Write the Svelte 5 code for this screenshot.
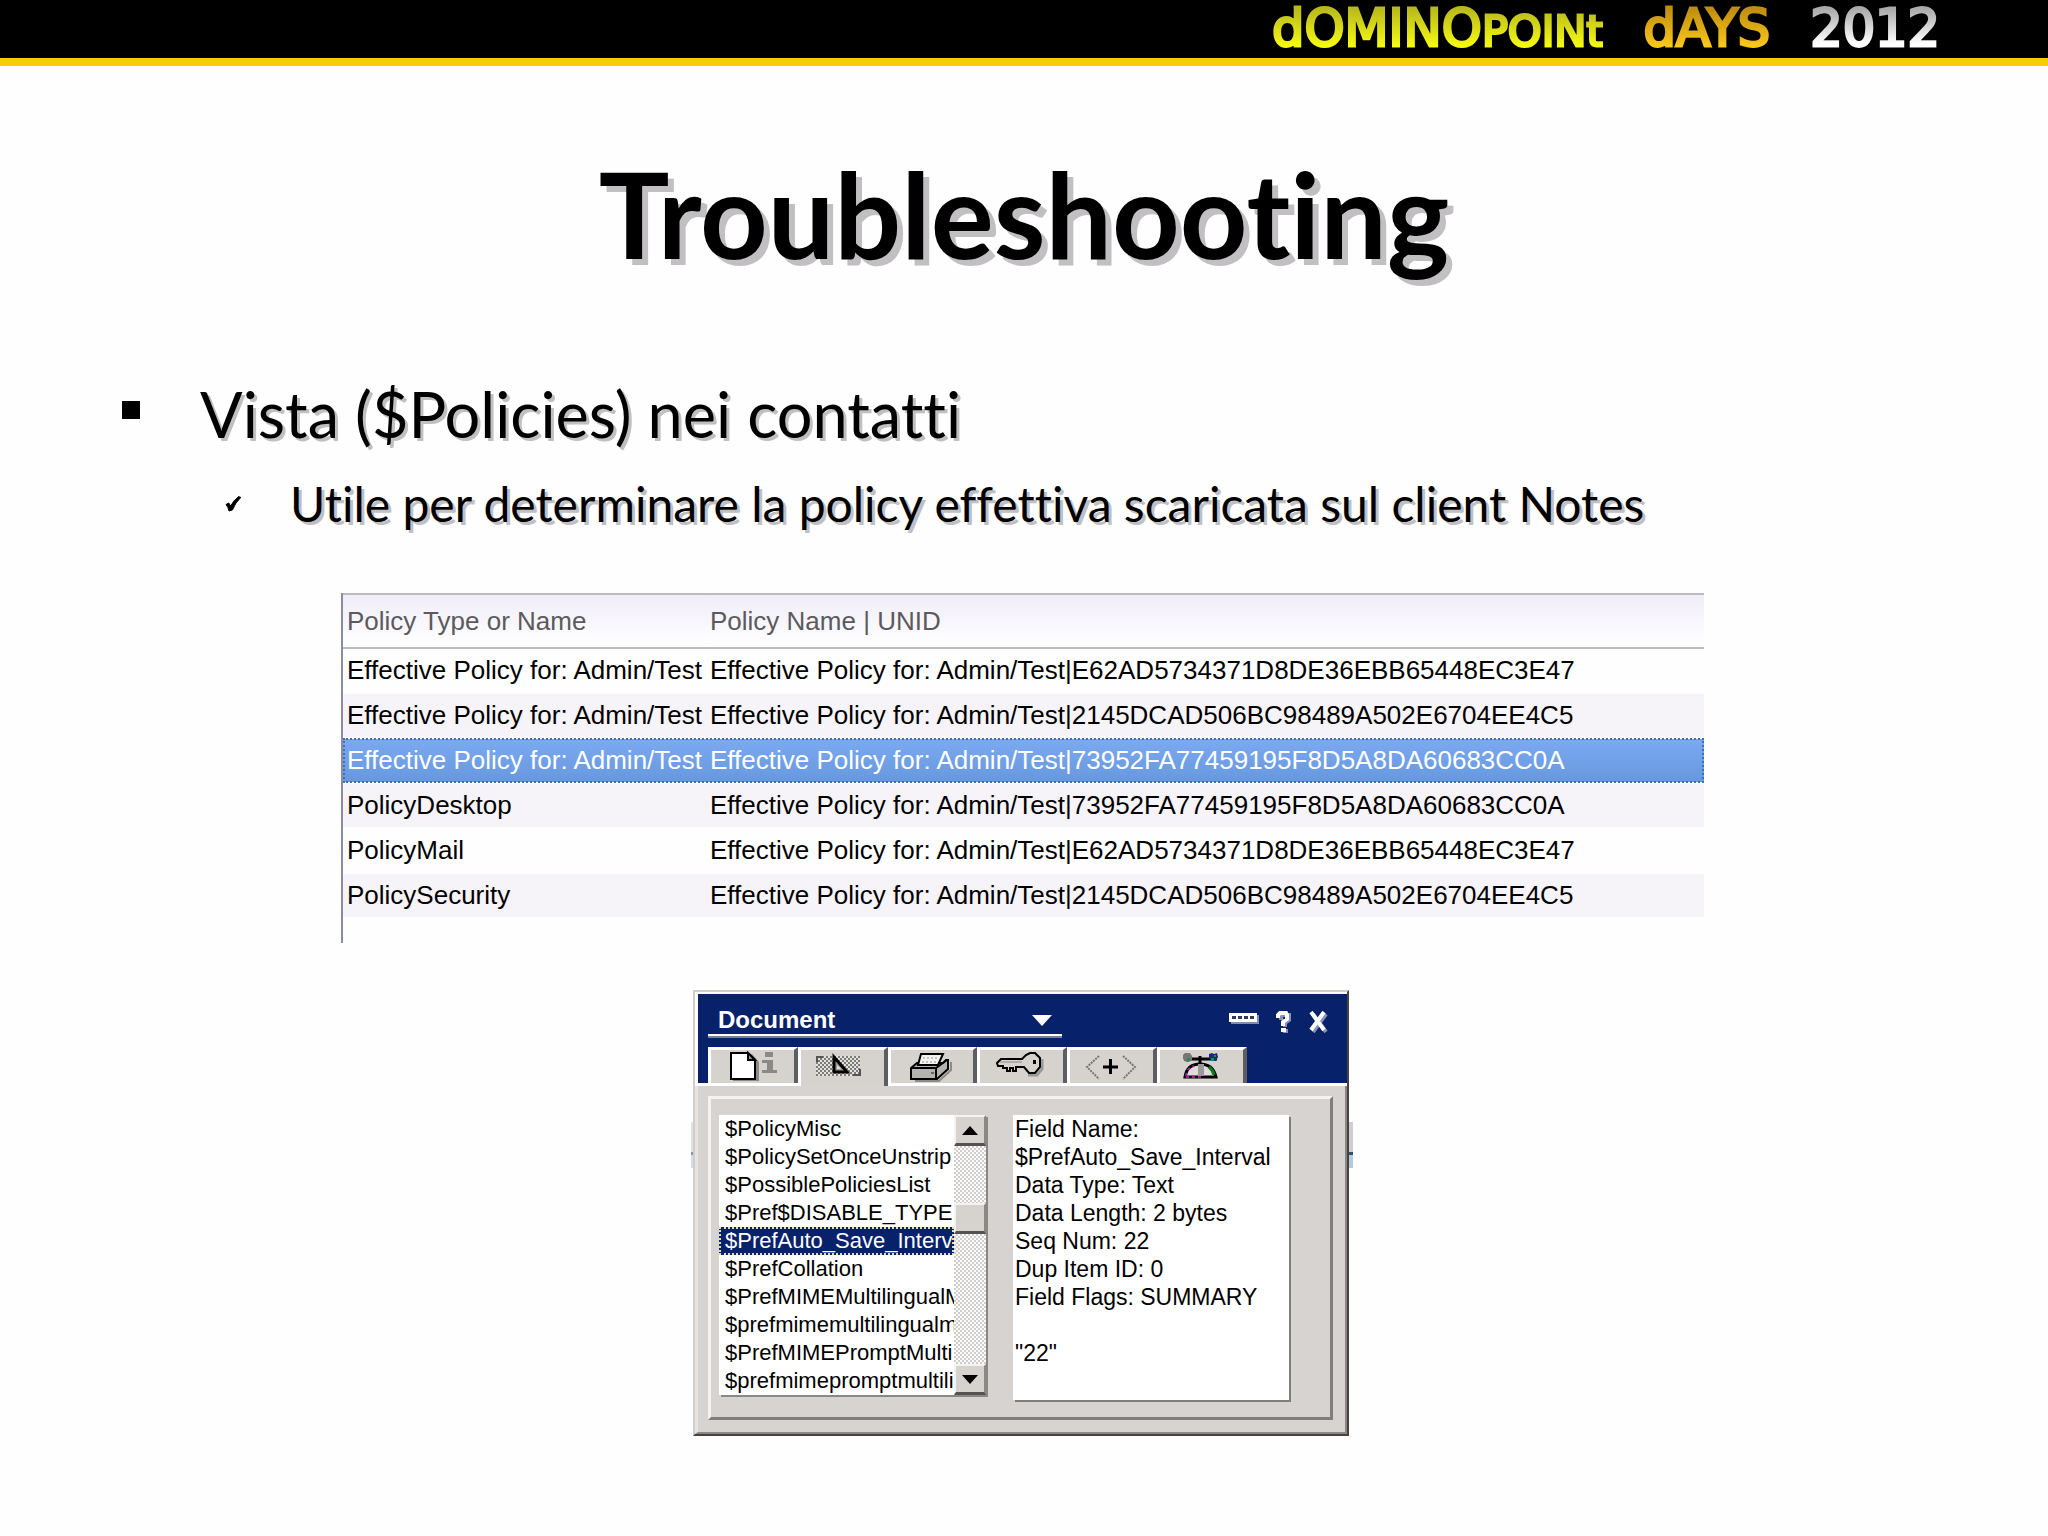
<script>
  const columns = ['Policy Type or Name', 'Policy Name | UNID'];
  const prefix = 'Effective Policy for: Admin/Test';
  const ids = {
    mail: 'E62AD5734371D8DE36EBB65448EC3E47',
    security: '2145DCAD506BC98489A502E6704EE4C5',
    desktop: '73952FA77459195F8D5A8DA60683CC0A'
  };
  const rows = [
    { name: prefix, id: ids.mail },
    { name: prefix, id: ids.security },
    { name: prefix, id: ids.desktop, selected: true },
    { name: 'PolicyDesktop', id: ids.desktop },
    { name: 'PolicyMail', id: ids.mail },
    { name: 'PolicySecurity', id: ids.security }
  ];
  const fields = [
    '$PolicyMisc',
    '$PolicySetOnceUnstrip',
    '$PossiblePoliciesList',
    '$Pref$DISABLE_TYPE',
    '$PrefAuto_Save_Interv',
    '$PrefCollation',
    '$PrefMIMEMultilingualM',
    '$prefmimemultilingualm',
    '$PrefMIMEPromptMulti',
    '$prefmimepromptmultilin'
  ];
  let current = $state(4);
  let tab = $state(1);
  const tabs = ['Info', 'Fields', 'Print', 'Security', 'Meta', 'Document IDs'];
  const details = [
    'Field Name:',
    '$PrefAuto_Save_Interval',
    'Data Type: Text',
    'Data Length: 2 bytes',
    'Seq Num: 22',
    'Dup Item ID: 0',
    'Field Flags: SUMMARY',
    '',
    '"22"'
  ];
</script>

<div class="slide">
  <header>
    <div class="brand">
      <span class="word lime">dOMINO<small>POINt</small></span>
      <span class="word gold">dAYS</span>
      <span class="word silver">2012</span>
    </div>
  </header>

  <main>
    <h1>Troubleshooting</h1>

    <ul class="outline">
      <li class="lead">
        <i class="square"></i>
        <span>Vista ($Policies) nei contatti</span>
      </li>
      <li class="sub">
        <svg viewBox="0 0 16 16" width="16" height="16" aria-hidden="true">
          <path d="M1 8.5 L3.8 7 L5.600 10 Q9 4 13.600 .6 L15.800 1.400 Q10 7 7.400 14 L4 15 Q3 10.500 1 8.500Z" stroke="#000" />
        </svg>
        <span>Utile per determinare la policy effettiva scaricata sul client Notes</span>
      </li>
    </ul>

    <div class="view">
      <table>
        <thead>
          <tr>{#each columns as c}<th scope="col">{c}</th>{/each}</tr>
        </thead>
        <tbody>
          {#each rows as row}
            <tr class:selected={row.selected}>
              <td>{row.name}</td>
              <td>{prefix}|{row.id}</td>
            </tr>
          {/each}
        </tbody>
      </table>
    </div>

    <section class="stage">
      <div class="dialog">
        <div class="caption">
          <label class="chooser">
            <select aria-label="Properties of">
              <option>Document</option>
            </select>
            <svg viewBox="0 0 20 11" width="20" height="11" aria-hidden="true"><path d="M0 0h20L10 11z" fill="#fff" /></svg>
          </label>
          <div class="tools">
            <button aria-label="Collapse">
              <svg viewBox="0 0 30 12" width="30" height="12">
                <path d="M2 2h28v9H2z" fill="#7f8bb0" />
                <path d="M0 0h28v9H0z" fill="#fff" />
                <path d="M3 3h4v3H3zM9 3h4v3H9zM15 3h4v3h-4zM21 3h4v3h-4z" fill="#333a5c" />
              </svg>
            </button>
            <button aria-label="Help">
              <svg viewBox="0 0 16 22" width="16" height="22">
                <g fill="none" stroke-width="4">
                  <path d="M3 8V3h8v5l-4 3v4M5 19h5" stroke="#8792b5" transform="translate(2 1)" />
                  <path d="M2 7V4l2-2h6l1 2v4l-4 3v4M5 19h5" stroke="#fff" />
                </g>
              </svg>
            </button>
            <button aria-label="Close">
              <svg viewBox="0 0 20 22" width="20" height="22">
                <path d="M2 1l13 18M15 1L2 19" stroke="#8792b5" stroke-width="4" transform="translate(2 2)" />
                <path d="M2 1l13 18M15 1L2 19" stroke="#fff" stroke-width="4" />
              </svg>
            </button>
          </div>
        </div>

        <div class="tabs" role="tablist">
          {#each tabs as name, i}
            <button role="tab" aria-label={name} aria-selected={tab === i} onclick={() => (tab = i)}>
              <svg viewBox="0 0 60 33" width="60" height="33">
                {#if i === 0}
                  <path d="M11 5v26h26V12l-7-8" fill="#8d8b88" />
                  <path d="M9 3h17l7 7v19H9z" fill="#fff" stroke="#000" stroke-width="2" />
                  <path d="M26 3v7h7z" fill="#999" stroke="#000" stroke-width="2" />
                  <path d="M43 2h8v5h-8zM40 10h11v10h4v3H40v-3h5v-7h-5z" fill="#8b8986" />
                {:else if i === 1}
                  <path d="M4 6h44v20H4z" fill="url(#dither)" />
                  <path d="M5 12V7h6M48 19v6h-7" fill="none" stroke="#555" stroke-width="2" />
                  <path d="M22 7v15h13z" fill="#9b9996" stroke="#000" stroke-width="3" />
                  <path d="M25 15v4h4z" fill="#e4e2df" />
                {:else if i === 2}
                  <path d="M13 31h24l12-11v-8" fill="none" stroke="#8d8b88" stroke-width="2" />
                  <path d="M9 18l6-5h26l3-3h2v9L35 29H9z" fill="#b5b3b0" stroke="#000" stroke-width="2" />
                  <path d="M9 18h25l11-8M34 18v10" fill="none" stroke="#000" stroke-width="2" />
                  <path d="M16 15l3-11h22l-5 11z" fill="#f4f3f1" stroke="#000" stroke-width="2" />
                  <path d="M21 7h2v2h-2zM25 7h2v2h-2zM29 7h2v2h-2zM33 7h2v2h-2zM20 11h2v2h-2zM24 11h2v2h-2zM28 11h2v2h-2zM32 11h2v2h-2z" fill="#c4c2bf" />
                  <path d="M29 23h3" stroke="#666" stroke-width="2" />
                {:else if i === 3}
                  <path d="M36 25h9l5-6V9" fill="none" stroke="#999" stroke-width="3" />
                  <path d="M30 9l4-4 4-2h5l5 5v9l-5 6h-6l-5-6h-8v4h-3v-3h-3v3h-3v-3h-4v-2H6l-1-3 4-4z" fill="#d6d3ce" stroke="#000" stroke-width="2" />
                  <path d="M8 12h22" stroke="#8b8986" stroke-width="1" />
                  <path d="M41 10h3v4h-3z" />
                {:else if i === 4}
                  <path d="M17 6L5 17l12 12M41 6l12 11-12 12" fill="none" stroke="#777" stroke-width="2" stroke-dasharray="2 1" />
                  <path d="M21 17h15M28.500 9v15" stroke="#000" stroke-width="3" />
                {:else}
                  <path d="M13 27q2-13 15-13t16 13z" fill="#dedcda" stroke="#000" stroke-width="3" />
                  <path d="M29 14v12" stroke="#999" stroke-width="6" />
                  <path d="M14 26q1-8 8-10M14 27h16" fill="none" stroke="#a21aa0" stroke-width="2" stroke-dasharray="3 3" />
                  <path d="M37 17q4 3 5 8" fill="none" stroke="#087a18" stroke-width="3" />
                  <path d="M12 9h33M28 6v8" stroke="#000" stroke-width="3" />
                  <path d="M13 3h5l2 3v4l-3 2h-3l-3-3V5z" fill="#777" />
                  <path d="M37 4l3-1 2 1 3-1 1 4-2 4h-4l-3-3z" fill="#1c2a7a" />
                  <path d="M15 8h3v3h-3zM42 5h2v2h-2zM39 8h3v3h-3z" fill="#1f8a5c" />
                {/if}
              </svg>
            </button>
          {/each}
        </div>

        <div class="body">
          <div class="panel">
            <div class="picker">
              <ul role="listbox" aria-label="Fields">
                {#each fields as f, i}
                  <li role="option" aria-selected={current === i}>{f}</li>
                {/each}
              </ul>
              <div class="scroll">
                <button aria-label="Scroll up"><svg viewBox="0 0 16 9" width="16" height="9"><path d="M0 9l8-9 8 9z" /></svg></button>
                <div class="track above"></div>
                <div class="thumb"></div>
                <div class="track below"></div>
                <button aria-label="Scroll down"><svg viewBox="0 0 16 9" width="16" height="9"><path d="M0 0l8 9 8-9z" /></svg></button>
              </div>
            </div>
            <div class="details">
              {#each details as line}<p>{line}</p>{/each}
            </div>
          </div>
        </div>
      </div>
    </section>
  </main>

  <svg class="defs" width="0" height="0" aria-hidden="true">
    <defs>
      <pattern id="dither" width="4" height="4" patternUnits="userSpaceOnUse">
        <path d="M0 0h4v4H0z" fill="#e4e2df" />
        <path d="M0 0h2v2H0zM2 2h2v2H2z" fill="#7d7b79" />
      </pattern>
    </defs>
  </svg>
</div>

<style>
  :global(body) {
    margin: 0;
    background: #fefefe;
  }
  .slide {
    font-family: Lato, sans-serif;
    font-variant-ligatures: none;
    color: #000;
  }
  h1, ul, p { margin: 0; padding: 0; }
  ul { list-style: none; }
  button {
    padding: 0;
    border: 0;
    background: none;
    display: flex;
    align-items: center;
    justify-content: center;
  }
  svg { display: block; flex: none; }

  header {
    display: flex;
    justify-content: flex-end;
    height: 58px;
    padding-right: 108px;
    background: #000;
    border-bottom: 8px solid #fccb05;
  }
  .brand {
    display: flex;
    gap: 40px;
    font: 51px/58px "DejaVu Sans", sans-serif;
  }
  .word {
    color: transparent;
    background-clip: text;
    -webkit-background-clip: text;
    -webkit-text-stroke: 3px transparent;
  }
  .word small { font-size: 43px; }
  .lime { background-image: linear-gradient(#b9b91c 15%, #f6fb10 80%); }
  .gold { background-image: linear-gradient(#c08d10 15%, #fbc81a 80%); }
  .silver { background-image: linear-gradient(#aaa 15%, #fff 75%); }

  h1 {
    padding-top: 78px;
    text-align: center;
    font-size: 118px;
    line-height: 140px;
    font-weight: 700;
    text-shadow: 6px 6px 0 #c1bfc1;
  }
  .outline {
    padding: 92px 120px 0 122px;
    text-shadow: 3px 3px 0 #c1bfc1;
  }
  .outline li { display: flex; align-items: center; }
  .lead {
    gap: 60px;
    font-size: 63px;
    line-height: 76px;
  }
  .sub {
    gap: 49px;
    padding: 22px 0 0 103px;
    font-size: 48px;
    line-height: 60px;
  }
  .square { width: 18px; height: 18px; margin-bottom: 8px; background: #000; }

  .view {
    margin: 59px 16.8% 0 341px;
    padding-bottom: 24px;
    border-left: 2px solid #8b8ba8;
  }
  table {
    width: 100%;
    border-collapse: collapse;
    table-layout: fixed;
    font: 26px/43px "Liberation Sans", Arial, sans-serif;
  }
  th, td { padding: 0 0 0 4px; text-align: left; white-space: nowrap; }
  th:first-child { width: 359px; }
  th {
    height: 52px;
    font-weight: 400;
    color: #5c5a5e;
    background: linear-gradient(#f0edf8, #fff);
    border: solid #bdbbbf;
    border-width: 2px 0;
  }
  td { border-bottom: 2px solid #fefefe; }
  tbody tr:nth-child(even) { background: #f6f4f8; }
  tbody .selected {
    color: #fff;
    background: linear-gradient(#7baaf2, #6797dd);
    outline: 2px dotted #3f6fb5;
    outline-offset: -2px;
  }

  .stage {
    display: flex;
    justify-content: center;
    padding: 47px 6px 40px 0;
    font: 23px/28px "Liberation Sans", Arial, sans-serif;
  }
  .dialog {
    position: relative;
    border: 2px solid;
    border-color: #d0cdca #45423f #45423f #d0cdca;
    background: #d6d3d0;
  }
  .dialog::before,
  .dialog::after {
    content: "";
    position: absolute;
    top: 130px;
    width: 4px;
    height: 46px;
    background: linear-gradient(#cfcdd2 30px, #33506f 30px 33px, #b4c9dc 33px);
  }
  .dialog::before { right: calc(100% + 2px); width: 2px; opacity: 0.6; }
  .dialog::after { left: calc(100% + 2px); }

  .caption {
    display: flex;
    justify-content: space-between;
    align-items: flex-start;
    padding: 12px 18px 11px 10px;
    background: #07216b;
    border: solid #fff;
    border-width: 2px 0 0 3px;
  }
  .chooser {
    display: flex;
    align-items: center;
    justify-content: space-between;
    width: 354px;
    box-sizing: border-box;
    padding: 0 10px;
    border-bottom: 2px solid #fff;
    box-shadow: 0 2px #7a7f98;
  }
  select {
    appearance: none;
    padding: 0;
    border: 0;
    background: none;
    color: #fff;
    font: bold 24px/28px "Liberation Sans", Arial, sans-serif;
  }
  .tools { display: flex; align-items: center; gap: 17px; padding-top: 5px; }
  .tools button:first-child { margin-bottom: 6px; }

  .tabs {
    display: flex;
    padding: 0 100px 0 10px;
    background: #07216b;
    border-bottom: 3px solid #fff;
    border-left: 3px solid #fff;
  }
  .tabs button {
    flex: 1;
    height: 36px;
    box-sizing: border-box;
    background: #d6d3ce;
    border: solid #fff;
    border-width: 3px 4px 0 3px;
    border-right-color: #5e5d60;
  }
  .tabs button[aria-selected="true"] { height: 39px; margin-bottom: -3px; padding-bottom: 3px; }

  .body {
    padding: 10px 12px 12px 10px;
    border: solid;
    border-width: 0 2px 2px 3px;
    border-color: #fff #8a8784 #8a8784 #e6e4e2;
  }
  .panel {
    display: flex;
    align-items: flex-start;
    gap: 27px;
    padding: 16px 41px 17px 8px;
    border: solid;
    border-width: 3px;
    border-color: #f4f3f2 #807d7a #807d7a #f4f3f2;
  }
  .picker {
    display: flex;
    width: 267px;
    background: #fff;
    box-shadow: 2px 2px #8a8784;
  }
  .picker ul { width: 235px; overflow: hidden; font-size: 22px; }
  li[role="option"] {
    padding-left: 6px;
    white-space: nowrap;
    overflow: hidden;
  }
  li[role="option"][aria-selected="true"] {
    color: #fff;
    background: #07216b;
    outline: 2px dotted #e8dfa0;
    outline-offset: -2px;
  }
  .scroll { display: flex; flex-direction: column; width: 32px; }
  .scroll button,
  .thumb {
    height: 31px;
    box-sizing: border-box;
    background: #d6d3ce;
    border: solid;
    border-width: 2px 2px 3px;
    border-color: #f4f3f2 #8a8784 #55524f #f4f3f2;
  }
  .track { background: repeating-conic-gradient(#d0cdca 0 25%, #fbfbfb 0 50%) 0 0 / 4px 4px; }
  .above { height: 57px; }
  .below { flex: 1; }
  .details {
    width: 276px;
    height: 285px;
    box-sizing: border-box;
    padding-left: 2px;
    background: #fff;
    box-shadow: 2px 2px #807d7a;
  }
  .details p { height: 28px; }
</style>
